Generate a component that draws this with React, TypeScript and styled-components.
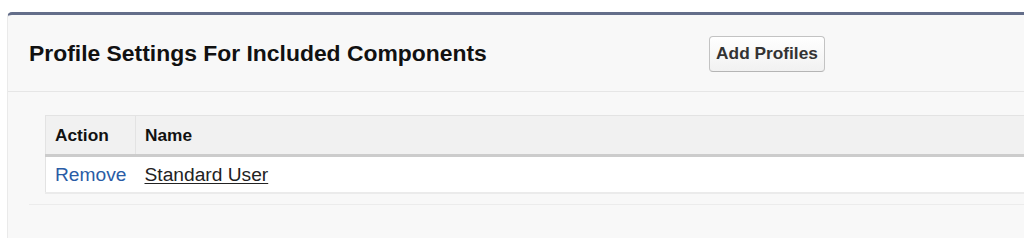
import React from "react";
import styled, { createGlobalStyle } from "styled-components";

const GlobalStyle = createGlobalStyle`
  html, body {
    margin: 0;
    padding: 0;
    background: #ffffff;
    overflow: hidden;
    font-family: "Liberation Sans", Arial, Helvetica, sans-serif;
  }
`;

const Page = styled.div`
  padding: 12px 0 0 7px;
  height: 238px;
  box-sizing: border-box;
`;

const Panel = styled.section`
  margin-right: -20px;
  height: 226px;
  box-sizing: border-box;
  background: #f8f8f8;
  border-top: 3px solid #646e8a;
  border-left: 1px solid #eaeaea;
  border-radius: 5px 0 0 0;
`;

const PanelHeader = styled.div`
  display: flex;
  align-items: center;
  height: 77px;
  padding: 1px 0 0 21px;
  box-sizing: border-box;
  border-bottom: 1px solid #e6e6e6;
`;

const Title = styled.h2`
  margin: 0;
  width: 680px;
  font-size: 22.9px;
  font-weight: bold;
  color: #111;
`;

const Button = styled.button`
  box-sizing: border-box;
  height: 36px;
  width: 116px;
  padding: 0;
  font-family: inherit;
  font-size: 17.3px;
  font-weight: bold;
  color: #333;
  background: linear-gradient(#ffffff, #f1f1f1);
  border: 1px solid #c3c3c3;
  border-bottom-color: #b5b5b5;
  border-radius: 4px;
  cursor: pointer;
`;

const PanelBody = styled.div`
  padding: 23px 0 0 37px;
`;

const Table = styled.table`
  width: 100%;
  border-collapse: collapse;
  background: #ffffff;
  border: 1px solid #e3e3e3;
  border-right: none;
`;

const HeadCell = styled.th<{ $width?: number }>`
  width: ${(p) => (p.$width ? `${p.$width}px` : "auto")};
  height: 40px;
  padding: 1px 0 0 9px;
  box-sizing: border-box;
  text-align: left;
  font-size: 17.3px;
  font-weight: bold;
  color: #111;
  background: #f1f1f1;
  border-bottom: 3px solid #cccccc;
  border-right: 1px solid #e3e3e3;
`;

const Cell = styled.td`
  height: 37px;
  padding: 1px 0 0 9px;
  box-sizing: border-box;
  font-size: 19.2px;
  color: #222;
  border-bottom: 2px solid #ebebeb;
  white-space: nowrap;
`;

const ActionLink = styled.a`
  color: #2a5ca6;
  text-decoration: none;
`;

const NameLink = styled.a`
  color: #222;
  text-decoration: underline;
  text-underline-offset: 2px;
`;

const PanelFooter = styled.div`
  margin: 10px 0 0 21px;
  border-top: 1px solid #ececec;
`;

export default function App() {
  return (
    <>
      <GlobalStyle />
      <Page>
        <Panel>
          <PanelHeader>
            <Title>Profile Settings For Included Components</Title>
            <Button type="button">Add Profiles</Button>
          </PanelHeader>
          <PanelBody>
            <Table>
              <thead>
                <tr>
                  <HeadCell $width={90}>Action</HeadCell>
                  <HeadCell>Name</HeadCell>
                </tr>
              </thead>
              <tbody>
                <tr>
                  <Cell>
                    <ActionLink href="#">Remove</ActionLink>
                  </Cell>
                  <Cell>
                    <NameLink href="#">Standard User</NameLink>
                  </Cell>
                </tr>
              </tbody>
            </Table>
          </PanelBody>
          <PanelFooter />
        </Panel>
      </Page>
    </>
  );
}
